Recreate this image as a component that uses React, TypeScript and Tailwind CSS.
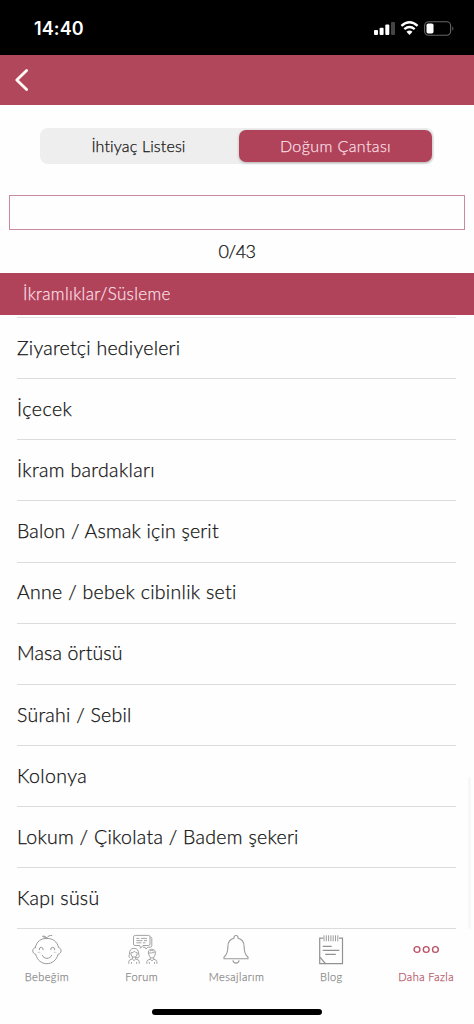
import type { ReactNode } from 'react'

const ITEMS = [
  { label: 'Ziyaretçi hediyeleri', tracking: 'tracking-[0.25px]' },
  { label: 'İçecek', tracking: 'tracking-[0.5px]' },
  { label: 'İkram bardakları', tracking: 'tracking-[0.35px]' },
  { label: 'Balon / Asmak için şerit', tracking: 'tracking-[0.2px]' },
  { label: 'Anne / bebek cibinlik seti', tracking: 'tracking-[0.3px]' },
  { label: 'Masa örtüsü', tracking: 'tracking-[0.15px]' },
  { label: 'Sürahi / Sebil', tracking: 'tracking-[0.25px]' },
  { label: 'Kolonya', tracking: 'tracking-[0.4px]' },
  { label: 'Lokum / Çikolata / Badem şekeri', tracking: 'tracking-[0.3px]' },
  { label: 'Kapı süsü', tracking: 'tracking-[0.25px]' },
]

// ─── Status bar ───────────────────────────────────────────────────────────────

function StatusBar() {
  return (
    <div className="flex h-[55px] shrink-0 items-center justify-between bg-black pl-[34px] pr-[17.5px] pt-[2px]">
      <span className="font-['Inter',sans-serif] text-[18px] font-semibold tracking-[0.1px] text-white [-webkit-text-stroke:0]">14:40</span>
      <svg width="84" height="16" viewBox="0 0 84 16" fill="none">
        {/* Signal */}
        <rect x="1" y="9" width="4" height="5" rx="1" fill="#fff" />
        <rect x="6.6" y="6.8" width="4" height="7.2" rx="1" fill="#fff" />
        <rect x="12.3" y="3.6" width="4" height="10.4" rx="1" fill="#fff" />
        <rect x="18" y="1" width="4" height="13" rx="1" fill="#444" />
        {/* Wifi */}
        <path d="M28.4 4.9 Q36.5 -2.2 44.6 4.9" stroke="#fff" strokeWidth="2.4" />
        <path d="M31.3 8.2 Q36.5 3.9 41.7 8.2" stroke="#fff" strokeWidth="2.3" />
        <path d="M33.5 10.8 Q36.5 8.4 39.5 10.8 L36.5 14 Z" fill="#fff" />
        {/* Battery */}
        <rect x="51.6" y="0.7" width="26" height="13.6" rx="4" stroke="#666" strokeWidth="1.1" />
        <rect x="53.5" y="2.6" width="7" height="9.8" rx="1.6" fill="#fff" />
        <path d="M79.3 5.2 Q81.6 7.5 79.3 9.8 Z" fill="#666" />
      </svg>
    </div>
  )
}

// ─── Tab bar ──────────────────────────────────────────────────────────────────

function BabyIcon() {
  return (
    <svg width="32" height="32" viewBox="0 0 32 32" fill="none" stroke="#989898" strokeWidth="1" strokeLinecap="round">
      <path d="M4.3 13.6 C5.5 7.2 10.1 4.4 15.8 4.4 S26.2 7.2 27.5 13.6 C31 14.1 31 19.5 27.2 20.1 C25.5 26.3 21 29.7 15.8 29.7 S6.2 26.3 4.6 20.1 C0.8 19.5 0.8 14.1 4.3 13.6Z" />
      <path d="M16 4.4 C15 2.6 13.4 1.8 11.6 2.2 C12.4 3.4 14.1 3.8 16 3.7 C17 2 18.8 1.2 20.8 1.5" />
      <path d="M8.2 15.7 Q8.2 13.2 10.2 13.2 T12.2 15.7 M19.7 15.7 Q19.7 13.2 21.7 13.2 T23.7 15.7 M11.2 21.3 C12.8 25.5 19 25.5 20.7 21.3" />
      <path d="M7 18.3h2 M23 18.3h2" strokeOpacity=".45" />
    </svg>
  )
}

function ForumIcon() {
  return (
    <svg width="32" height="32" viewBox="0 0 32 32" fill="none" stroke="#9a9a9a" strokeWidth="0.9" strokeLinejoin="round">
      <path d="M9.5 1.4 H22.5 Q24 1.4 24 2.9 V10 Q24 11.5 22.5 11.5 H17 L14.6 14.2 L13.8 11.5 H9 Q7.5 11.5 7.5 10 V2.9 Q7.5 1.4 9.5 1.4Z" />
      <path d="M24.2 3 Q25.8 3.1 25.8 4.5 V11.8 Q25.8 13.2 24.3 13.2 H21.8 L20 15 L19 13.2 H17" />
      <path d="M10.4 4.4h3 M15 4.4h6 M10.4 6.6h6 M18 6.6h3 M10.4 8.8h5 M17 8.8h2.4" />
      {/* Left person */}
      <path d="M4 24 Q2.2 22.6 3.4 20.4 Q3.3 14.3 8 14.3 T12.8 20.4 Q14 22.6 12 24 Q10.8 24.4 10.4 23" />
      <path d="M4.9 18.8 Q7.2 19 8.5 17.2 Q9.4 18.8 11.2 18.8 V20 Q10.8 23.3 8 23.3 T4.9 20Z M6.4 23 V25 L8 26.6 L9.7 25 V23" />
      <path d="M2.8 29.8 V27.5 Q2.8 25.6 6.3 25 M9.8 25 Q13.2 25.6 13.2 27.5 V29.8 M5.5 28 V29.8 M10.6 28 V29.8" />
      {/* Right person */}
      <path d="M22.6 20 Q21.5 15.5 25.7 15.3 Q30 15.2 29.3 20 L28.6 22 Q27.8 24 26 24 T23.4 22Z M22.7 18.9 Q26 19.5 28.8 18 M24 17 Q25.8 15.8 27.6 17" />
      <path d="M24.3 23.6 V25.3 L26 26.8 L27.7 25.3 V23.6 M20.8 29.8 V27.7 Q20.8 25.9 24.2 25.2 M27.8 25.2 Q30.9 25.9 30.9 27.7 V29.8 M23.3 28 V29.8 M28.5 28 V29.8" />
    </svg>
  )
}

function BellIcon() {
  return (
    <svg width="32" height="32" viewBox="0 0 32 32" fill="none" stroke="#999" strokeWidth="1.1" strokeLinejoin="round">
      <path d="M14 4.3 V3.5 Q14 1.5 16 1.5 T18 3.5 V4.3 C22.2 5.2 24 8.5 24.1 12.5 C24.2 18.5 25.2 21.2 28 23 V24.7 H4 V23 C6.8 21.2 7.8 18.5 7.9 12.5 C8 8.5 9.8 5.2 14 4.3Z" />
      <path d="M12.9 26.4 Q13.4 29.1 16 29.1 T19.1 26.4" />
    </svg>
  )
}

function NoteIcon() {
  return (
    <svg width="32" height="32" viewBox="0 0 32 32" fill="none" stroke="#929292" strokeWidth="1.2">
      <path d="M8.2 4.2 H4.7 V23 L10.6 29.7 H27.5 V4.2 H24" />
      <path d="M4.7 23 V29.7 H10.6" />
      <path d="M9 1.3v6 M11.3 1.3v6 M13.6 1.3v6 M15.9 1.3v6 M18.2 1.3v6 M20.5 1.3v6 M22.8 1.3v6" strokeWidth=".9" />
      <path d="M7.7 12.4h9 M7.7 16.4h16.6 M10.2 20.4h10.6" />
    </svg>
  )
}

function MoreIcon() {
  return (
    <svg width="32" height="32" viewBox="0 0 32 32" fill="none" stroke="#b95367" strokeWidth="1.4">
      <circle cx="7" cy="15.5" r="2.9" />
      <circle cx="16.2" cy="15.5" r="2.9" />
      <circle cx="25.4" cy="15.5" r="2.9" />
    </svg>
  )
}

function Tab({ icon, label, active }: { icon: ReactNode; label: string; active?: boolean }) {
  return (
    <div className={`flex flex-1 flex-col items-center whitespace-nowrap text-[11px] leading-4 tracking-[0.45px] ${active ? 'text-[#b95a6d]' : 'text-[#8c8c8c]'}`}>
      {icon}
      <span className="mt-[3px]">{label}</span>
    </div>
  )
}

// ─── Main export ──────────────────────────────────────────────────────────────

export default function App() {
  return (
    <div className="flex h-[1024px] w-[474px] flex-col overflow-hidden bg-[#fefefe] font-['Lato',sans-serif] font-light text-[#111] [-webkit-text-stroke:0.25px]">
      <StatusBar />

      <header className="flex h-[50px] shrink-0 items-center bg-[#b0475b] pl-[14px]">
        <svg width="16" height="24" viewBox="0 0 16 24" fill="none">
          <path d="M12.6 2.5 L2.8 12 L12.6 21.5" stroke="#fff8f3" strokeWidth="2.9" strokeLinecap="round" strokeLinejoin="round" />
        </svg>
      </header>

      {/* Segmented control */}
      <div className="mx-10 mt-[23px] flex h-9 shrink-0 rounded-lg bg-[#eee] p-[2px] text-[16px]">
        <div className="flex flex-1 items-center justify-center pb-px pr-1 tracking-[0.15px]">İhtiyaç Listesi</div>
        <div className="flex w-[193px] items-center justify-center rounded-[7px] bg-[#b0435a] pb-px tracking-[0.4px] text-[#f8dfe2] shadow-[0_1px_3px_rgba(0,0,0,0.25)]">
          Doğum Çantası
        </div>
      </div>

      {/* Progress */}
      <div className="mx-[9px] mt-[31px] h-[35px] shrink-0 border border-[#c98a9c]" />
      <div className="flex h-[43px] shrink-0 items-center justify-center text-[18px] tracking-[-0.5px]">0/43</div>

      <div className="flex h-[42px] shrink-0 items-center bg-[#b0435a] pl-[23px] text-[17px] tracking-[0.35px] text-[#f8dfe2]">
        İkramlıklar/Süsleme
      </div>

      {/* List with its scroll indicator */}
      <div className="flex h-[614px] shrink-0 justify-between pl-[17px] pt-[2.1px]">
        <ul className="w-[439px] border-t border-[#e2e2e2]">
          {ITEMS.map(item => (
            <li key={item.label} className={`flex h-[61.12px] items-center border-b border-[#dcdcdc] pb-[1.2px] text-[19.5px] ${item.tracking}`}>
              {item.label}
            </li>
          ))}
        </ul>
        <div className="mr-[3px] h-[152px] w-[3px] self-end rounded-full bg-[#f7f7f7]" />
      </div>

      <nav className="-ml-[0.5px] flex h-[80px] w-[474px] shrink-0 pt-[5px]">
        <Tab icon={<BabyIcon />} label="Bebeğim" />
        <Tab icon={<ForumIcon />} label="Forum" />
        <Tab icon={<BellIcon />} label="Mesajlarım" />
        <Tab icon={<NoteIcon />} label="Blog" />
        <Tab icon={<MoreIcon />} label="Daha Fazla" active />
      </nav>
      <div className="mx-auto h-[6px] w-[170px] shrink-0 rounded-full bg-black" />
    </div>
  )
}
